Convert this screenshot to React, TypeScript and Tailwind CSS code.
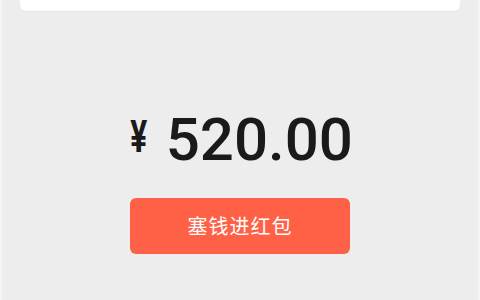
import React from 'react';

export default function App() {
  return (
    <div className="w-[480px] h-[300px] bg-[#f4f4f4] px-[2px] overflow-hidden">
      <div className="h-full bg-[#ededed] flex flex-col items-center" style={{ fontFamily: 'Roboto, "Noto Sans CJK SC", sans-serif' }}>
        <div className="w-[440px] h-[11px] bg-white rounded-b-[6px] shadow-[0_1px_0_#e6e6e6]" />
        <div className="mt-[99px] flex items-end text-[#1a1a1a] leading-none">
          <span className="text-[44px] font-bold mb-[11px] mr-[15px] scale-x-[0.72] inline-block">¥</span>
          <span className="text-[60px] font-medium">520.00</span>
        </div>
        <button className="mt-[28px] w-[220px] h-[56px] rounded-[6px] bg-[#ff6146] text-white text-[20px] tracking-[1px]" style={{ fontFamily: '"Noto Sans CJK SC", sans-serif' }}>
          塞钱进红包
        </button>
      </div>
    </div>
  );
}
